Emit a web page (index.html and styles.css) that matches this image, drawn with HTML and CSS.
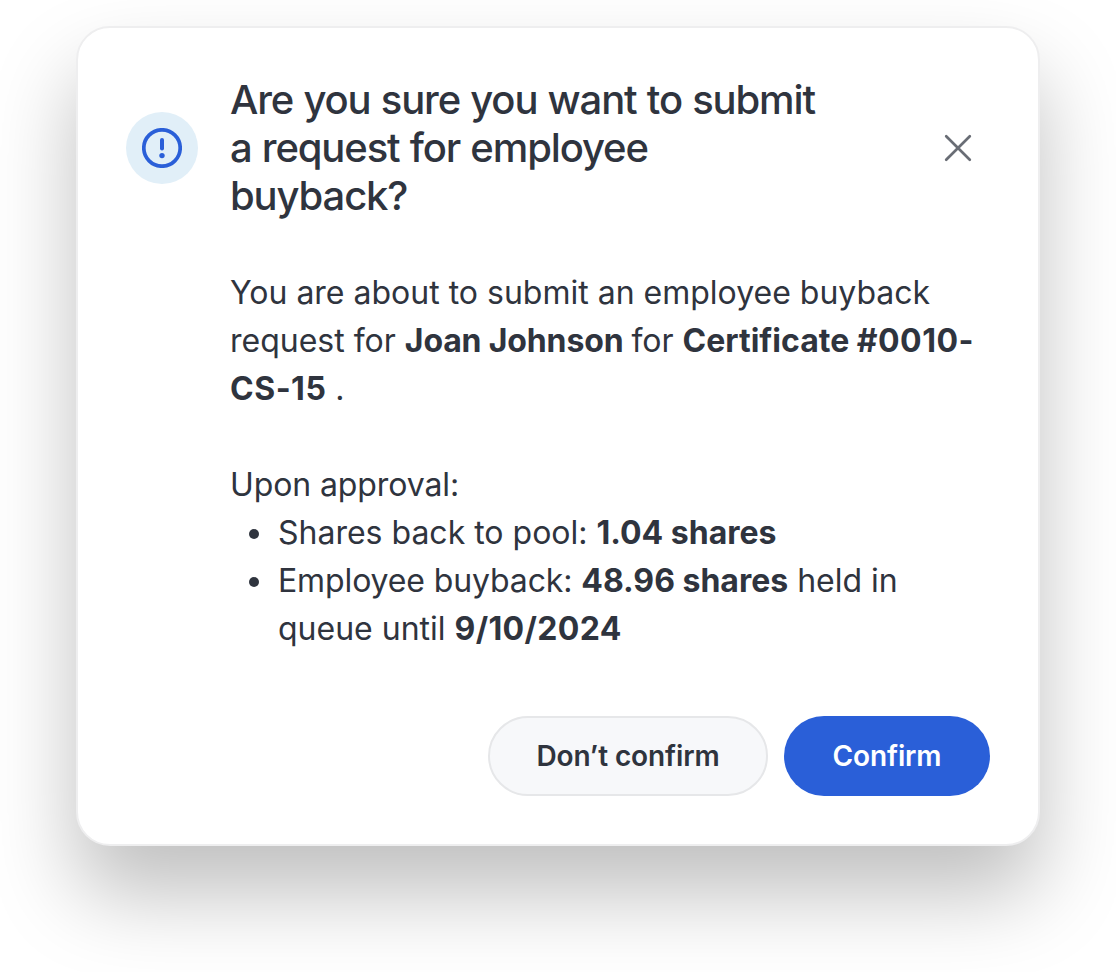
FILE: index.html
```html
<!DOCTYPE html>
<html lang="en">
<head>
<meta charset="utf-8">
<title>Confirm employee buyback</title>
<link rel="stylesheet" href="styles.css">
</head>
<body>
<div class="dialog" role="dialog" aria-labelledby="dialog-title">
  <header class="dialog-header">
    <span class="badge">
      <svg class="badge-icon" viewBox="0 0 40 40" fill="none">
        <circle cx="20" cy="20" r="18.2" stroke="currentColor" stroke-width="3.7"/>
        <path d="M20 12v8.6" stroke="currentColor" stroke-width="4" stroke-linecap="round"/>
        <circle cx="20" cy="27.6" r="2.7" fill="currentColor"/>
      </svg>
    </span>
    <h1 class="title" id="dialog-title">Are you sure you want to submit<br>a request for employee<br>buyback?</h1>
    <button class="close" type="button" aria-label="Close">
      <svg class="close-icon" viewBox="0 0 28 28" fill="none">
        <path d="M2.2 2.2l23.6 23.6M25.8 2.2L2.2 25.8" stroke="currentColor" stroke-width="2.7" stroke-linecap="round"/>
      </svg>
    </button>
  </header>
  <div class="content">
    <p class="text">You are about to submit an employee buyback<br>request for <b class="name">Joan Johnson</b> for <b>Certificate <span class="number">#0010-<br>CS-15</span></b> .</p>
    <p class="text approval">Upon approval:</p>
    <ul class="outcomes">
      <li>Shares back to pool: <b>1.04 shares</b></li>
      <li><span class="outcome-label">Employee buyback: </span><b>48.96 shares</b> held in<br>queue until <b class="date">9/10/2024</b></li>
    </ul>
  </div>
  <footer class="actions">
    <button class="button secondary" type="button">Don’t confirm</button>
    <button class="button primary" type="button">Confirm</button>
  </footer>
</div>
</body>
</html>
```
FILE: styles.css
```css
* { box-sizing: border-box; }
body {
  margin: 0;
  height: 972px;
  padding: 26px 76px 0;
  overflow: hidden;
  background: #fff;
  color: #2f343e;
  font-family: Inter, sans-serif;
}
.dialog {
  width: 964px;
  height: 820px;
  padding: 48px;
  border: 2px solid #eeeeef;
  border-radius: 34px;
  background: #fff;
  box-shadow: 0 48px 84px rgba(0, 0, 0, .25);
}
.dialog-header { display: flex; align-items: center; height: 144px; }
.badge {
  display: flex;
  align-items: center;
  justify-content: center;
  width: 72px;
  height: 72px;
  margin-right: 32px;
  border-radius: 50%;
  background: #e1eff8;
  color: #2a5fd8;
}
.badge-icon { width: 40px; height: 40px; }
.title {
  margin: 0;
  font-size: 40px;
  font-weight: 500;
  line-height: 48px;
  letter-spacing: -1.13px;
  word-spacing: .7px;
  white-space: nowrap;
}
.close {
  display: flex;
  margin: 0 18px 0 auto;
  padding: 0;
  border: 0;
  background: none;
  color: #696d75;
}
.close-icon { width: 28px; height: 28px; }
.content {
  margin: 49px 0 0 104px;
  font-size: 32px;
  line-height: 48px;
  white-space: nowrap;
}
.text { margin: 0; }
.approval { margin-top: 48px; letter-spacing: -.1px; }
.outcomes { margin: 0; padding-left: 46px; }
.outcomes li { padding-left: 2px; }
.content b { font-weight: 700; }
.content .name { letter-spacing: -.15px; margin-right: -1px; }
.number { letter-spacing: .5px; }
.content .date { letter-spacing: .35px; }
.outcome-label { letter-spacing: -.12px; }
.actions { display: flex; justify-content: flex-end; gap: 16px; margin-top: 63px; }
.button {
  height: 80px;
  padding: 0;
  border: 0;
  border-radius: 40px;
  font: 600 28px/40px Inter, sans-serif;
  letter-spacing: -.12px;
}
.secondary { width: 280px; border: 2px solid #e6e7e9; background: #f7f8fa; color: #2f343e; }
.primary { width: 206px; background: #2a5fd8; color: #fff; }
```
